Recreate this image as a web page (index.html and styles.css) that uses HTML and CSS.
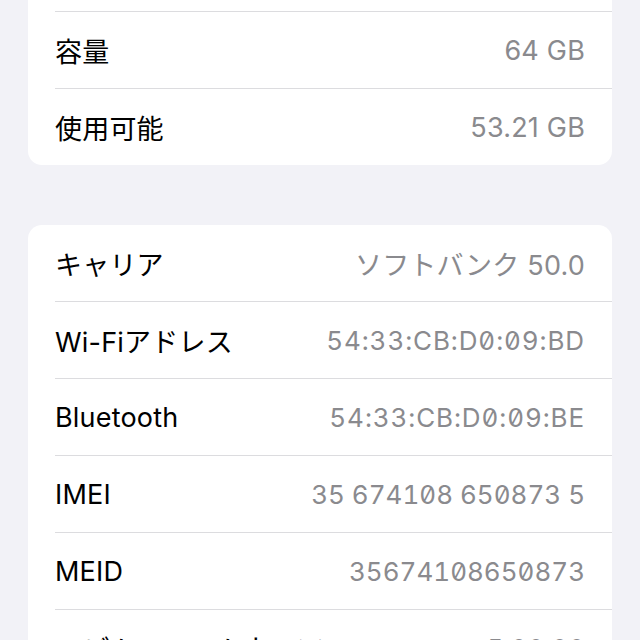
FILE: index.html
```html
<!DOCTYPE html>
<html lang="ja">
<head>
  <meta charset="UTF-8">
  <title>情報</title>
  <link rel="stylesheet" href="styles.css">
</head>
<body>
  <main>
    <div class="group group-first">
      <div class="row"><span class="label">App</span><span class="value">42</span></div>
      <div class="row"><span class="label">容量</span><span class="value">64 GB</span></div>
      <div class="row"><span class="label">使用可能</span><span class="value">53.21 GB</span></div>
    </div>

    <div class="group">
      <div class="row"><span class="label">キャリア</span><span class="value">ソフトバンク 50.0</span></div>
      <div class="row"><span class="label">Wi-Fiアドレス</span><span class="value mono addr">54:33:CB:D0:09:BD</span></div>
      <div class="row"><span class="label">Bluetooth</span><span class="value mono addr">54:33:CB:D0:09:BE</span></div>
      <div class="row"><span class="label">IMEI</span><span class="value mono">35 674108 650873 5</span></div>
      <div class="row"><span class="label">MEID</span><span class="value mono">35674108650873</span></div>
      <div class="row"><span class="label">モデムファームウェア</span><span class="value mono">5.00.00</span></div>
    </div>
  </main>
</body>
</html>
```

FILE: styles.css
```css
body { margin: 0; background: #f2f2f7; font-family: Inter, "Noto Sans CJK JP", sans-serif; font-size: 27px; color: #000; overflow: hidden; }
main { padding: 0 28px; }
.group { background: #fff; border-radius: 14px; margin-top: 60px; }
.group-first { margin-top: -65px; }
.row { display: flex; justify-content: space-between; align-items: center; height: 76px; margin-left: 27px; padding-right: 27px; }
.row + .row { border-top: 1px solid #dcdcdf; }
.label { letter-spacing: 0.2px; }
.value { color: #8a8a8e; letter-spacing: 0.2px; }
.mono { font-size: 26px; letter-spacing: 0; font-feature-settings: "tnum", "zero"; }
.addr { letter-spacing: 0.9px; }
```
